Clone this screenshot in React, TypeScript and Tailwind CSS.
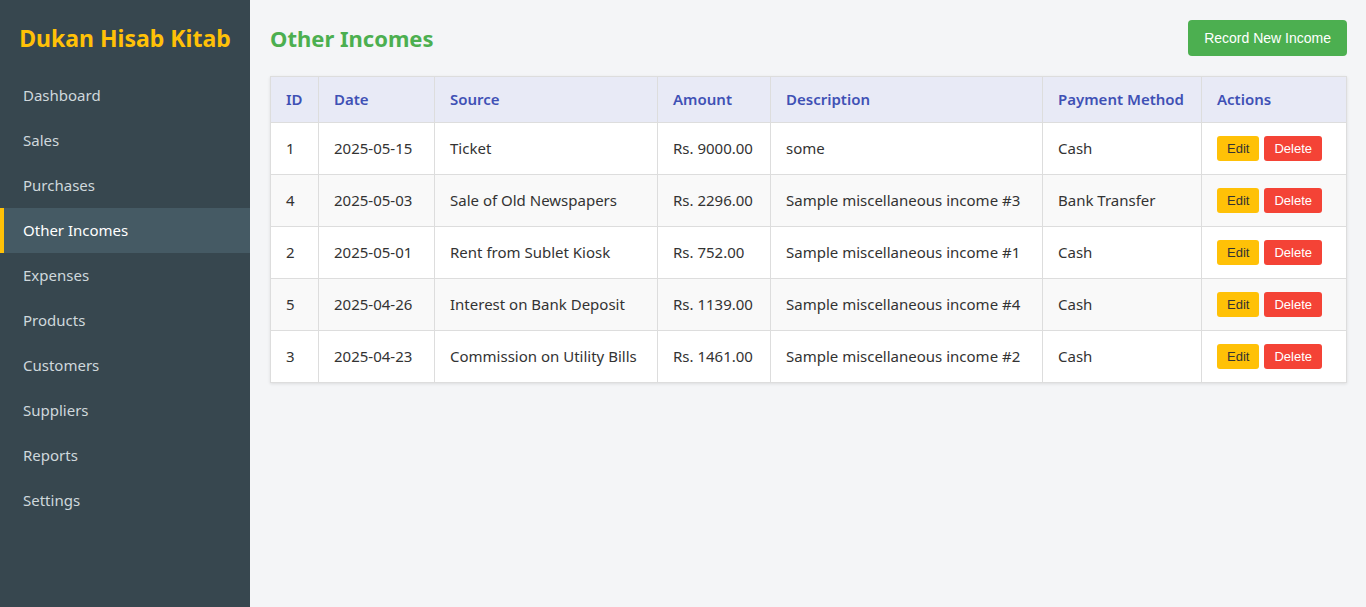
import React from "react";

const nav = ["Dashboard","Sales","Purchases","Other Incomes","Expenses","Products","Customers","Suppliers","Reports","Settings"];
const rows = [
  ["1","2025-05-15","Ticket","Rs. 9000.00","some","Cash"],
  ["4","2025-05-03","Sale of Old Newspapers","Rs. 2296.00","Sample miscellaneous income #3","Bank Transfer"],
  ["2","2025-05-01","Rent from Sublet Kiosk","Rs. 752.00","Sample miscellaneous income #1","Cash"],
  ["5","2025-04-26","Interest on Bank Deposit","Rs. 1139.00","Sample miscellaneous income #4","Cash"],
  ["3","2025-04-23","Commission on Utility Bills","Rs. 1461.00","Sample miscellaneous income #2","Cash"],
];
const heads = ["ID","Date","Source","Amount","Description","Payment Method","Actions"];
const widths = ["w-[48px]","w-[116px]","w-[223px]","w-[113px]","w-[272px]","w-[159px]","w-[145px]"];

export default function App() {
  return (
    <div className="flex min-h-[607px] font-['Noto_Sans',sans-serif]">
      <aside className="w-[250px] shrink-0 bg-[#37474f] shadow-[2px_0_5px_rgba(0,0,0,0.1)]">
        <h1 className="h-[73px] pt-[20px] text-center text-[23px] font-bold leading-[36px] text-[#ffc107]">Dukan Hisab Kitab</h1>
        <nav className="flex flex-col">
          {nav.map((n) => (
            <div key={n} className={`flex h-[45px] items-center text-[15px] ${n === "Other Incomes" ? "border-l-4 border-[#ffc107] bg-[#455a64] pl-[19px] text-white" : "pl-[23px] text-[#cfd8dc]"}`}>{n}</div>
          ))}
        </nav>
      </aside>
      <main className="flex-1 bg-[#f4f5f7] p-[20px]">
        <div className="mb-[20px] flex h-[36px] items-center justify-between">
          <h2 className="text-[22px] font-bold text-[#4caf50]">Other Incomes</h2>
          <button className="h-[36px] rounded-[4px] bg-[#4caf50] px-[16px] font-['Liberation_Sans',Arial,sans-serif] text-[14px] text-white">Record New Income</button>
        </div>
        <table className="w-full table-fixed border-collapse bg-white text-[15px] text-[#333] shadow-[0_1px_3px_rgba(0,0,0,0.1)]">
          <colgroup>{widths.map((w, i) => <col key={i} className={w} />)}</colgroup>
          <thead>
            <tr className="h-[46px] bg-[#e8eaf6]">
              {heads.map((h) => (
                <th key={h} className="whitespace-nowrap border border-[#ddd] px-[15px] text-left font-semibold text-[#3f51b5]">{h}</th>
              ))}
            </tr>
          </thead>
          <tbody>
            {rows.map((r, i) => (
              <tr key={i} className={`h-[52px] ${i % 2 === 1 ? "bg-[#f9f9f9]" : "bg-white"}`}>
                {r.map((c, j) => (
                  <td key={j} className="whitespace-nowrap border border-[#ddd] px-[15px]">{c}</td>
                ))}
                <td className="border border-[#ddd] px-[15px]">
                  <div className="flex gap-[5px] font-['Liberation_Sans',Arial,sans-serif] text-[13px]">
                    <button className="h-[25px] rounded-[3px] bg-[#ffc107] px-[10px] text-[#333]">Edit</button>
                    <button className="h-[25px] rounded-[3px] bg-[#f44336] px-[10px] text-white">Delete</button>
                  </div>
                </td>
              </tr>
            ))}
          </tbody>
        </table>
      </main>
    </div>
  );
}
